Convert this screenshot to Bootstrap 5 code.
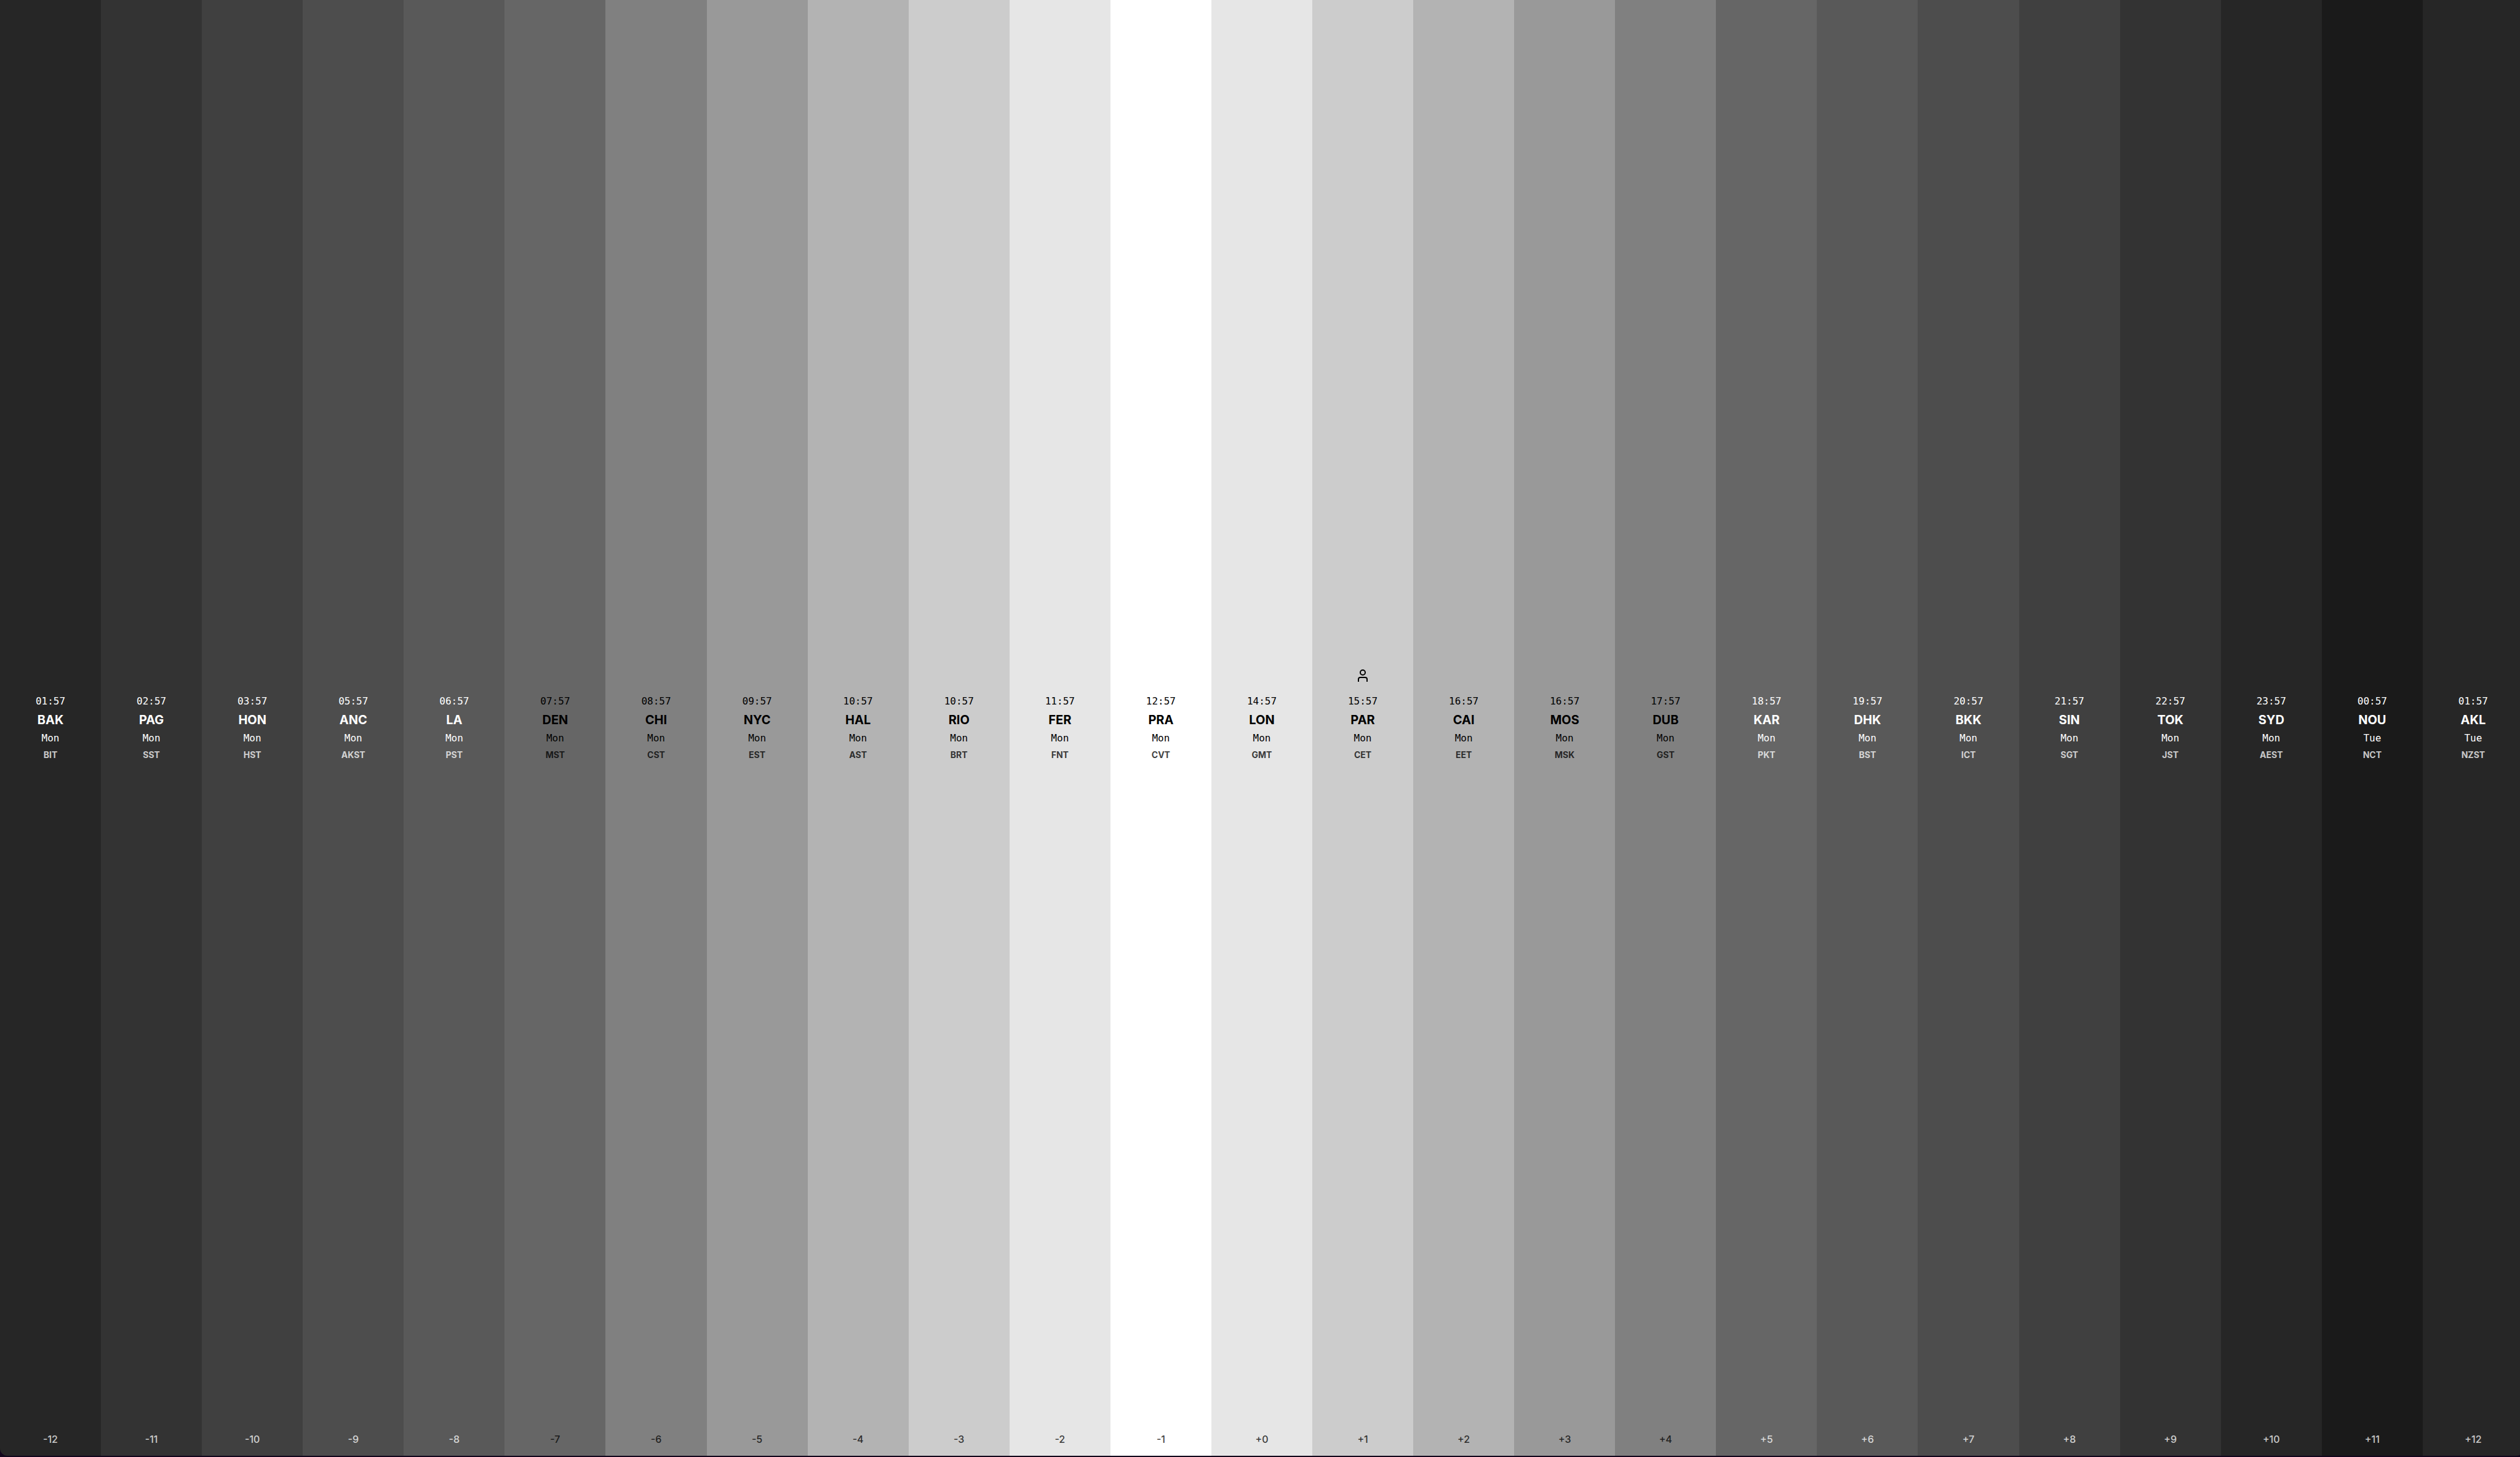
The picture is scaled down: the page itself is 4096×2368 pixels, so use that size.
<!DOCTYPE html>
<html lang="en">
<head>
<meta charset="utf-8">
<meta name="viewport" content="width=device-width, initial-scale=1">
<title>World clock</title>
<link rel="stylesheet" href="https://cdn.jsdelivr.net/npm/bootstrap@5.3.0/dist/css/bootstrap.min.css">
<style>
body { background: #12061c; font-family: Inter, "Liberation Sans", sans-serif; }
.clock-board { padding-bottom: 2px; }
/* the strip runs slightly past the right edge of the window */
.zone-strip { border-radius: 0 0 12px 12px; margin-right: -6px; }
.zone { flex: 1 1 0; min-width: 0; padding: 16px 0; }
.on-dark { color: #fff; }
.on-light { color: #000; }
.zone-time, .zone-day { font-family: "DejaVu Sans Mono", monospace; font-size: 16px; line-height: 28px; }
.zone-city { font-size: 20px; font-weight: 700; line-height: 32px; margin: 0; }
.zone-abbr { font-size: 14px; font-weight: 700; line-height: 26px; }
.zone-offset { font-size: 16px; line-height: 24px; font-weight: 500; bottom: 15px; }
.here-icon { width: 24px; height: 24px; bottom: 100%; margin-bottom: 16px; }
.zone-abbr, .zone-offset { opacity: .75; }
</style>
<script src="https://cdn.jsdelivr.net/npm/bootstrap@5.3.0/dist/js/bootstrap.bundle.min.js"></script>
</head>
<body>
<div class="clock-board vh-100 d-flex overflow-hidden">
<main class="zone-strip d-flex flex-fill overflow-hidden" id="zones"></main>
</div>
<script>
const zones = [
["01:57","BAK","Mon","BIT","-12","262626"],["02:57","PAG","Mon","SST","-11","333333"],["03:57","HON","Mon","HST","-10","404040"],
["05:57","ANC","Mon","AKST","-9","4d4d4d"],["06:57","LA","Mon","PST","-8","595959"],["07:57","DEN","Mon","MST","-7","666666",1],
["08:57","CHI","Mon","CST","-6","808080",1],["09:57","NYC","Mon","EST","-5","999999",1],["10:57","HAL","Mon","AST","-4","b3b3b3",1],
["10:57","RIO","Mon","BRT","-3","cccccc",1],["11:57","FER","Mon","FNT","-2","e6e6e6",1],["12:57","PRA","Mon","CVT","-1","ffffff",1],
["14:57","LON","Mon","GMT","+0","e6e6e6",1],["15:57","PAR","Mon","CET","+1","cccccc",1],["16:57","CAI","Mon","EET","+2","b3b3b3",1],
["16:57","MOS","Mon","MSK","+3","999999",1],["17:57","DUB","Mon","GST","+4","808080",1],["18:57","KAR","Mon","PKT","+5","666666"],
["19:57","DHK","Mon","BST","+6","595959"],["20:57","BKK","Mon","ICT","+7","4d4d4d"],["21:57","SIN","Mon","SGT","+8","404040"],
["22:57","TOK","Mon","JST","+9","333333"],["23:57","SYD","Mon","AEST","+10","262626"],["00:57","NOU","Tue","NCT","+11","1a1a1a"],
["01:57","AKL","Tue","NZST","+12","262626"]];
const person = '<svg class="here-icon position-absolute start-50 translate-middle-x" viewBox="0 0 24 24" fill="none" stroke="currentColor" stroke-width="2" role="img" aria-label="You are here"><circle cx="12" cy="7" r="4"/><path d="M5 22v-4a3 3 0 0 1 3-3h8a3 3 0 0 1 3 3v4"/></svg>';
document.getElementById("zones").innerHTML = zones.map(([time, city, day, abbr, offset, shade, light]) => `
<section class="zone ${light ? "on-light" : "on-dark"} position-relative d-flex flex-column align-items-center justify-content-center text-center" style="background-color:#${shade}">
<div class="position-relative">
${city === "PAR" ? person : ""}
<div class="zone-time">${time}</div>
<h2 class="zone-city">${city}</h2>
<div class="zone-day">${day}</div>
<div class="zone-abbr">${abbr}</div>
</div>
<div class="zone-offset position-absolute start-0 end-0">${offset}</div>
</section>`).join("");
</script>
</body>
</html>
